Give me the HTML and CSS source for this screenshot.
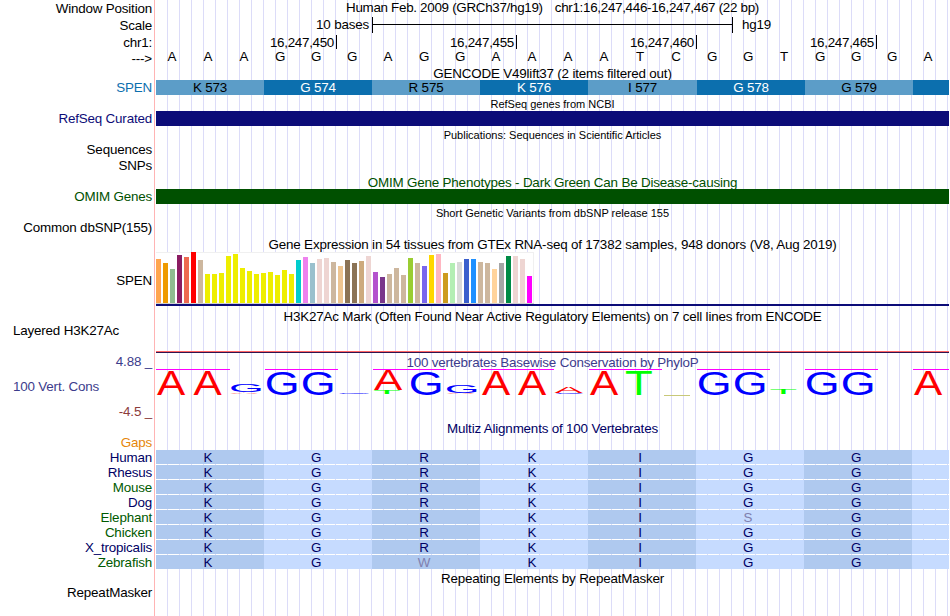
FILE: index.html
```
<!DOCTYPE html>
<html lang="en">
<head>
<meta charset="utf-8">
<title>Genome browser chr1:16,247,446-16,247,467</title>
<link rel="stylesheet" href="styles.css">
</head>
<body>
<main class="browser">
  <div class="labels">
    <div class="label first">Window Position</div>
    <div class="label gap-2">Scale</div>
    <div class="label gap-2">chr1:</div>
    <div class="label gap-1">---&gt;</div>
    <div class="label gap-14 gencode">SPEN</div>
    <div class="label gap-16 navy">RefSeq Curated</div>
    <div class="label gap-16">Sequences</div>
    <div class="label gap-1">SNPs</div>
    <div class="label gap-16 omim">OMIM Genes</div>
    <div class="label gap-16">Common dbSNP(155)</div>
    <div class="label gap-38">SPEN</div>
    <div class="label gap-35 outer">Layered H3K27Ac</div>
    <div class="label gap-16 cons">4.88 _</div>
    <div class="label gap-10 cons outer">100 Vert. Cons</div>
    <div class="label gap-10 cons-min">-4.5 _</div>
    <div class="label gap-16 gaps">Gaps</div>
    <div class="label primate">Human</div>
    <div class="label primate">Rhesus</div>
    <div class="label species">Mouse</div>
    <div class="label primate">Dog</div>
    <div class="label species">Elephant</div>
    <div class="label species">Chicken</div>
    <div class="label primate">X_tropicalis</div>
    <div class="label species">Zebrafish</div>
    <div class="label gap-15">RepeatMasker</div>
  </div>

  <div class="tracks">
    <div class="title position"><span>Human Feb. 2009 (GRCh37/hg19)</span><span>chr1:16,247,446-16,247,467 (22 bp)</span></div>
    <div class="scale"><span class="scale-name">10 bases</span><span class="ruler"></span><span>hg19</span></div>
    <div class="coords"><span>16,247,450</span><span>16,247,455</span><span>16,247,460</span><span>16,247,465</span></div>
    <div class="bases"><span>A</span><span>A</span><span>A</span><span>G</span><span>G</span><span>G</span><span>A</span><span>G</span><span>G</span><span>A</span><span>A</span><span>A</span><span>A</span><span>T</span><span>C</span><span>G</span><span>G</span><span>T</span><span>G</span><span>G</span><span>G</span><span>A</span></div>

    <div class="title gencode-title">GENCODE V49lift37 (2 items filtered out)</div>
    <div class="codons"><span>K 573</span><span>G 574</span><span>R 575</span><span>K 576</span><span>I 577</span><span>G 578</span><span>G 579</span><span></span></div>

    <div class="title small refseq-title">RefSeq genes from NCBI</div>
    <div class="bar refseq-bar"></div>
    <div class="title small pub-title">Publications: Sequences in Scientific Articles</div>
    <div class="title omim omim-title">OMIM Gene Phenotypes - Dark Green Can Be Disease-causing</div>
    <div class="bar omim-bar"></div>
    <div class="title small snp-title">Short Genetic Variants from dbSNP release 155</div>
    <div class="title gtex-title">Gene Expression in 54 tissues from GTEx RNA-seq of 17382 samples, 948 donors (V8, Aug 2019)</div>
    <div class="gtex">
      <i style="height:44px;background:#ffa54f"></i><i style="height:40px;background:#ee9a00"></i><i style="height:34px;background:#8fbc8f"></i><i style="height:48px;background:#8b1c62"></i><i style="height:46px;background:#ee6a50"></i><i style="height:51px;background:#ff0000"></i><i style="height:43px;background:#cdb79e"></i><i style="height:29px;background:#eeee00"></i><i style="height:29px;background:#eeee00"></i><i style="height:30px;background:#eeee00"></i><i style="height:47px;background:#eeee00"></i><i style="height:49px;background:#eeee00"></i><i style="height:35px;background:#eeee00"></i><i style="height:32px;background:#eeee00"></i><i style="height:29px;background:#eeee00"></i><i style="height:30px;background:#eeee00"></i><i style="height:31px;background:#eeee00"></i><i style="height:28px;background:#eeee00"></i><i style="height:33px;background:#eeee00"></i><i style="height:29px;background:#eeee00"></i><i style="height:43px;background:#00cdcd"></i><i style="height:46px;background:#ee82ee"></i><i style="height:40px;background:#9ac0cd"></i><i style="height:44px;background:#eed5d2"></i><i style="height:45px;background:#eed5d2"></i><i style="height:41px;background:#cdb79e"></i><i style="height:37px;background:#eec591"></i><i style="height:43px;background:#8b7355"></i><i style="height:40px;background:#8b7355"></i><i style="height:42px;background:#cdaa7d"></i><i style="height:47px;background:#eed5d2"></i><i style="height:31px;background:#b452cd"></i><i style="height:26px;background:#7a378b"></i><i style="height:29px;background:#cdb79e"></i><i style="height:35px;background:#cdb79e"></i><i style="height:28px;background:#cdb79e"></i><i style="height:45px;background:#9acd32"></i><i style="height:40px;background:#cdb79e"></i><i style="height:37px;background:#7a67ee"></i><i style="height:48px;background:#ffd700"></i><i style="height:49px;background:#ffb6c1"></i><i style="height:30px;background:#cd9b1d"></i><i style="height:40px;background:#b4eeb4"></i><i style="height:41px;background:#d9d9d9"></i><i style="height:44px;background:#3a5fcd"></i><i style="height:44px;background:#1e90ff"></i><i style="height:41px;background:#cdb79e"></i><i style="height:40px;background:#cdb79e"></i><i style="height:34px;background:#ffd39b"></i><i style="height:40px;background:#a6a6a6"></i><i style="height:47px;background:#008b45"></i><i style="height:47px;background:#eed5d2"></i><i style="height:44px;background:#eed5d2"></i><i style="height:27px;background:#ff00ff"></i>
    </div>
    <div class="gene-line"></div>

    <div class="title h3k-title">H3K27Ac Mark (Often Found Near Active Regulatory Elements) on 7 cell lines from ENCODE</div>
    <div class="h3k-line"></div>

    <div class="title cons phylop-title">100 vertebrates Basewise Conservation by PhyloP</div>
    <svg class="logo" width="793" height="30" viewBox="156 368 793 30">
      <path class="cap" d="M156 369.5H230M265 369.5H338M373 369.5H446M481 369.5H554M589 369.5H662M697 369.5H770M805 369.5H878M913 369.5H949"/>
      <g class="a">
        <text transform="translate(157 395) scale(1.21 1)">A</text>
        <text transform="translate(193.5 395) scale(1.21 1)">A</text>
        <text transform="translate(230 394) scale(1.21 .06)">A</text>
        <text transform="translate(374 390) scale(1.21 .83)">A</text>
        <text transform="translate(446.500 394) scale(1.21 .05)">A</text>
        <text transform="translate(482 395) scale(1.21 1)">A</text>
        <text transform="translate(518 395) scale(1.21 1)">A</text>
        <text transform="translate(554.500 393) scale(1.21 .25)">A</text>
        <text transform="translate(590 395) scale(1.21 1)">A</text>
        <text transform="translate(914 395) scale(1.21 1)">A</text>
      </g>
      <g class="g">
        <text transform="translate(229 392) scale(1.28 .33)">G</text>
        <text transform="translate(264.800 394.600) scale(1.28 .96)">G</text>
        <text transform="translate(300.800 394.600) scale(1.28 .96)">G</text>
        <text transform="translate(337 394) scale(1.28 .07)">G</text>
        <text transform="translate(408.800 394.600) scale(1.28 .96)">G</text>
        <text transform="translate(444.800 393) scale(1.28 .32)">G</text>
        <text transform="translate(554 394) scale(1.25 .04)">C</text>
        <text transform="translate(696.800 394.600) scale(1.28 .96)">G</text>
        <text transform="translate(732.800 394.600) scale(1.28 .96)">G</text>
        <text transform="translate(804.800 394.600) scale(1.28 .96)">G</text>
        <text transform="translate(840.800 394.600) scale(1.28 .96)">G</text>
      </g>
      <g class="t">
        <text transform="translate(373 394) scale(1.3 .17)">T</text>
        <text transform="translate(625 395) scale(1.3 1)">T</text>
        <text transform="translate(769.500 394) scale(1.3 .21)">T</text>
      </g>
      <path class="faint" d="M664 395.500H690"/>
    </svg>

    <div class="title primate multiz-title">Multiz Alignments of 100 Vertebrates</div>
    <div class="align">
      <div class="row"><span>K</span><span>G</span><span>R</span><span>K</span><span>I</span><span>G</span><span>G</span><span></span></div>
      <div class="row"><span>K</span><span>G</span><span>R</span><span>K</span><span>I</span><span>G</span><span>G</span><span></span></div>
      <div class="row"><span>K</span><span>G</span><span>R</span><span>K</span><span>I</span><span>G</span><span>G</span><span></span></div>
      <div class="row"><span>K</span><span>G</span><span>R</span><span>K</span><span>I</span><span>G</span><span>G</span><span></span></div>
      <div class="row"><span>K</span><span>G</span><span>R</span><span>K</span><span>I</span><span class="diff">S</span><span>G</span><span></span></div>
      <div class="row"><span>K</span><span>G</span><span>R</span><span>K</span><span>I</span><span>G</span><span>G</span><span></span></div>
      <div class="row"><span>K</span><span>G</span><span>R</span><span>K</span><span>I</span><span>G</span><span>G</span><span></span></div>
      <div class="row"><span>K</span><span>G</span><span class="diff">W</span><span>K</span><span>I</span><span>G</span><span>G</span><span></span></div>
    </div>
    <div class="title repeat-title">Repeating Elements by RepeatMasker</div>
  </div>
</main>
</body>
</html>
```
FILE: styles.css
```
* { box-sizing: border-box; }
body {
  margin: 0;
  background: #fff;
  color: #000;
  font: 13.4px/15px "Liberation Sans", Arial, sans-serif;
  letter-spacing: -0.18px;
  overflow: hidden;
}
.browser {
  display: grid;
  grid-template-columns: 155px 793px;
  column-gap: 1px;
  width: 950px;
  height: 616px;
}
.labels {
  padding-right: 2px;
  border-right: 1px solid #ffb4b4;
  text-align: right;
  white-space: nowrap;
}
.label { height: 15px; }
.first { margin-top: 1px; }
.gap-1 { margin-top: 1px; }
.gap-2 { margin-top: 2px; }
.gap-10 { margin-top: 10px; }
.gap-14 { margin-top: 14px; }
.gap-15 { margin-top: 15px; }
.gap-16 { margin-top: 16px; }
.gap-35 { margin-top: 35px; }
.gap-38 { margin-top: 38px; }
.outer { text-align: left; padding-left: 13px; }
.gencode { color: #0c6fae; }
.navy { color: #0c0c78; }
.omim { color: #005000; }
.cons { color: #3c3c8c; }
.cons-min { color: #8c3c3c; }
.gaps { color: #e6860a; }
.primate { color: #000064; }
.species { color: #005a00; }

.tracks {
  background: repeating-linear-gradient(to right, transparent 0 11px, #dcdcf8 11px 12px);
}
.title { height: 15px; text-align: center; white-space: nowrap; }
.small { height: 13px; font-size: 11px; line-height: 13px; letter-spacing: 0; }
.position { display: flex; justify-content: center; gap: 12px; letter-spacing: -0.3px; }
.scale { display: flex; height: 17px; margin-top: 2px; }
.scale-name { width: 213px; text-align: right; margin-right: 3px; }
.ruler {
  width: 361px;
  height: 16px;
  margin-right: 9px;
  border: solid #000;
  border-width: 0 1px;
  background: linear-gradient(#000, #000) 0 7px / 100% 1px no-repeat;
}
.coords { display: flex; margin-top: 1px; height: 14px; letter-spacing: -0.3px; }
.coords span {
  width: 180px;
  height: 14px;
  padding-right: 2px;
  border-right: 1px solid #000;
  text-align: right;
}
.coords span:first-child { width: 181px; }
.bases { display: grid; grid-template-columns: repeat(22, 36px); margin-left: -2px; text-align: center; }
.gencode-title { height: 14px; margin-top: 2px; }
.codons { display: grid; grid-template-columns: repeat(4, 108px) 109px 108px 108px 36px; height: 15px; text-align: center; }
.codons span { background: #5c9dc8; height: 15px; }
.codons span:nth-child(even) { background: #0c6fae; color: #fff; }
.refseq-title { margin-top: 3px; }
.bar { height: 15px; }
.refseq-bar { background: #0c0c78; }
.pub-title { margin-top: 3px; }
.omim-title { margin-top: 33px; height: 14px; }
.omim-bar { background: #005000; }
.snp-title { margin-top: 3px; }
.gtex-title { margin-top: 17px; }
.gtex {
  display: flex;
  align-items: flex-end;
  gap: 2px;
  width: 378px;
  height: 52px;
  background: #fff;
  box-shadow: inset -1px 1px #f0f0f0;
  border-bottom: 1px solid #d0d0d0;
}
.gtex i { width: 5px; }
.gene-line { height: 2px; background: #0c0c78; }
.h3k-title { margin-top: 3px; }
.h3k-line { height: 2px; margin-top: 27px; background: linear-gradient(#ff6464 50%, #32144f 50%); }
.phylop-title { margin-top: 2px; height: 13px; }
.logo { display: block; font-size: 35px; letter-spacing: 0; overflow: hidden; }
.cap { stroke: #f0f; }
.a { fill: #f00; }
.g { fill: #00f; }
.t { fill: #0f0; }
.faint { stroke: #c8c878; }
.multiz-title { margin-top: 23px; }
.align { margin-top: 14px; color: #000064; }
.row { display: grid; grid-template-columns: repeat(7, 108px) 37px; height: 15px; text-align: center; }
.row span { height: 14px; padding-right: 4px; background: #c6dbff; }
.row span:nth-child(odd) { background: #afc9ef; }
.row .diff { color: #8080ae; }
.repeat-title { margin-top: 1px; }
```
